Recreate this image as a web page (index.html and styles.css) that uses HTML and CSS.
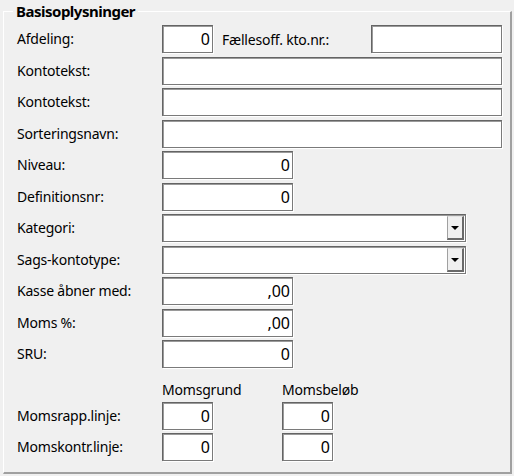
FILE: index.html
```html
<!DOCTYPE html>
<html>
<head>
  <title>Basisoplysninger</title>
  <link rel="stylesheet" href="styles.css">
</head>
<body>

  <fieldset class="group">
    <legend>Basisoplysninger</legend>

    <div class="form">
      <label>Afdeling:</label>
      <div class="line">
        <input class="box num short" type="text" value="0">
        <span class="inline-label">Fællesoff. kto.nr.:</span>
        <input class="box mid" type="text" value="">
      </div>

      <label>Kontotekst:</label>
      <input class="box wide" type="text" value="">

      <label>Kontotekst:</label>
      <input class="box wide" type="text" value="">

      <label>Sorteringsnavn:</label>
      <input class="box wide" type="text" value="">

      <label>Niveau:</label>
      <input class="box num mid" type="text" value="0">

      <label>Definitionsnr:</label>
      <input class="box num mid" type="text" value="0">

      <label>Kategori:</label>
      <div class="box combo">
        <span class="combo-text"></span>
        <span class="combo-btn"><i class="arrow"></i></span>
      </div>

      <label>Sags-kontotype:</label>
      <div class="box combo">
        <span class="combo-text"></span>
        <span class="combo-btn"><i class="arrow"></i></span>
      </div>

      <label>Kasse åbner med:</label>
      <input class="box num mid" type="text" value=",00">

      <label>Moms %:</label>
      <input class="box num mid" type="text" value=",00">

      <label>SRU:</label>
      <input class="box num mid" type="text" value="0">
    </div>

    <div class="vat">
      <span></span>
      <span class="col-head">Momsgrund</span>
      <span class="col-head">Momsbeløb</span>

      <label>Momsrapp.linje:</label>
      <input class="box num short" type="text" value="0">
      <input class="box num short" type="text" value="0">

      <label>Momskontr.linje:</label>
      <input class="box num short" type="text" value="0">
      <input class="box num short" type="text" value="0">
    </div>
  </fieldset>

</body>
</html>
```

FILE: styles.css
```css
body {
  margin: 0;
  background: #f0f0f0;
  color: #000;
  font-family: "Noto Sans", "Open Sans", sans-serif;
  font-size: 14px;
  letter-spacing: -0.2px;
}

.group {
  box-sizing: border-box;
  width: 509px;
  height: 472px;
  margin: 2px 2px 2px 3px;
  padding: 4px 10px 0 13px;
  min-width: 0;
  border-style: solid;
  border-width: 1px 2px 2px 1px;
  border-color: #fff #a0a0a0 #a0a0a0 #fff;
}

.group legend {
  margin-left: -4px;
  padding: 0 3px;
  font-weight: bold;
  font-size: 15px;
  line-height: 19px;
  letter-spacing: -0.5px;
}

.form {
  display: grid;
  grid-template-columns: 145px auto;
  grid-auto-rows: 28px;
  row-gap: 3.5px;
  align-items: center;
  justify-items: start;
}

.form label,
.vat label {
  line-height: 18px;
}

.line {
  display: flex;
  align-items: center;
  width: 340px;
}

.inline-label {
  margin-left: 9px;
  margin-right: auto;
}

/* sunken edit boxes */
.box {
  box-sizing: border-box;
  height: 28px;
  margin: 0;
  padding: 0 2px 0 3px;
  background: #fff;
  border: 1px solid #7a7a7a;
  border-top-color: #646464;
  border-left-color: #646464;
  box-shadow: inset 1px 1px 0 #9a9a9a, 1px 1px 0 #fff;
  font-family: inherit;
  font-size: 16px;
  letter-spacing: 0;
  color: #000;
  outline: none;
}

.num {
  text-align: right;
}

.short { width: 51px; }
.mid { width: 131px; }
.wide { width: 340px; }

.combo {
  display: flex;
  width: 304px;
  padding: 1px;
}

.combo-text {
  flex: 1;
}

.combo-btn {
  box-sizing: border-box;
  width: 17px;
  display: flex;
  align-items: center;
  justify-content: center;
  background: #f0f0f0;
  border-style: solid;
  border-width: 1px 2px 2px 1px;
  border-color: #e3e3e3 #696969 #696969 #a0a0a0;
}

.arrow {
  width: 0;
  height: 0;
  border-left: 4px solid transparent;
  border-right: 4px solid transparent;
  border-top: 4px solid #000;
  margin-top: 1px;
}

.vat {
  display: grid;
  grid-template-columns: 145px 120px 51px;
  grid-template-rows: 18px 28px 28px;
  row-gap: 3px;
  align-items: center;
  justify-items: start;
  margin-top: 13px;
}

.col-head {
  align-self: end;
  line-height: 18px;
  font-size: 14px;
}
```
